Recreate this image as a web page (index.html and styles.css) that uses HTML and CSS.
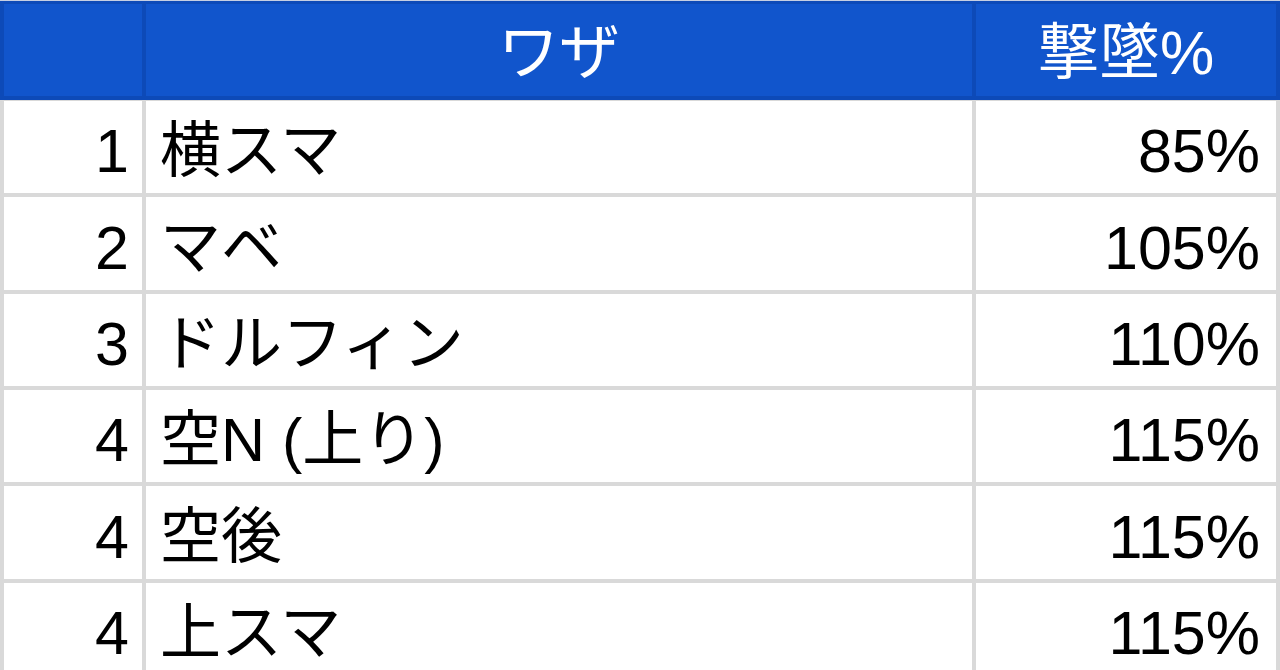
FILE: index.html
```html
<!DOCTYPE html>
<html lang="ja">
<head>
<meta charset="utf-8">
<title>撃墜%</title>
<link rel="stylesheet" href="styles.css">
</head>
<body>
<div class="sheet">
  <div class="head">
    <div class="hcell"></div>
    <div class="hcell">ワザ</div>
    <div class="hcell">撃墜%</div>
  </div>
  <div class="rows">
    <div class="cell num">1</div><div class="cell name">横スマ</div><div class="cell pct">85%</div>
    <div class="cell num">2</div><div class="cell name">マベ</div><div class="cell pct">105%</div>
    <div class="cell num">3</div><div class="cell name">ドルフィン</div><div class="cell pct">110%</div>
    <div class="cell num">4</div><div class="cell name">空N (上り)</div><div class="cell pct">115%</div>
    <div class="cell num">4</div><div class="cell name">空後</div><div class="cell pct">115%</div>
    <div class="cell num">4</div><div class="cell name">上スマ</div><div class="cell pct">115%</div>
  </div>
</div>
</body>
</html>
```
FILE: styles.css
```css
html, body {
  margin: 0;
  padding: 0;
  height: 670px;
  overflow: hidden;
  background: #ffffff;
}

.sheet {
  width: 1280px;
  font-family: "Liberation Sans", "Noto Sans CJK JP", sans-serif;
  font-size: 61px;
  line-height: 70px;
  color: #000000;
}

.head {
  display: grid;
  grid-template-columns: 138px 826px 300px;
  column-gap: 4px;
  padding: 3px 4px 4px;
  background: #0d4ab8;
  border-top: 1px solid #c6cfe3;
}

.hcell {
  height: 92px;
  box-sizing: border-box;
  background: #1155cc;
  color: #ffffff;
  display: flex;
  align-items: flex-end;
  justify-content: center;
  padding-bottom: 8px;
}

.rows {
  display: grid;
  grid-template-columns: 138px 826px 300px;
  grid-auto-rows: 92.33px;
  gap: 4px;
  padding: 1px 4px 0;
  background: #d9d9d9;
}

.cell {
  box-sizing: border-box;
  background: #ffffff;
  display: flex;
  align-items: flex-end;
  padding-bottom: 7px;
  white-space: nowrap;
}

.num {
  justify-content: flex-end;
  padding-right: 13px;
}

.name {
  justify-content: flex-start;
  padding-left: 14px;
}

.pct {
  justify-content: flex-end;
  padding-right: 16px;
}
```
